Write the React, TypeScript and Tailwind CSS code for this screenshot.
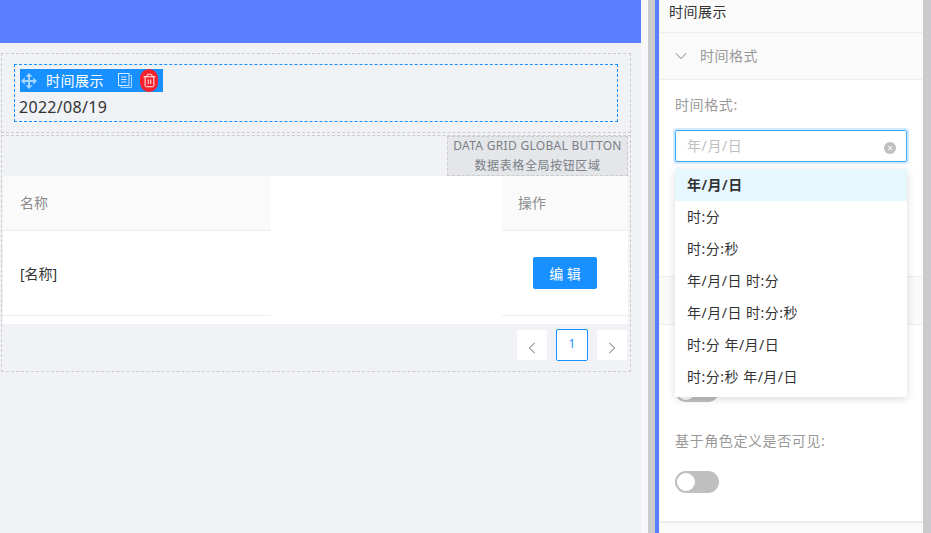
import React from 'react';
import { ChevronDown, ChevronLeft, ChevronRight, Trash2 } from 'lucide-react';

const font = 'font-["Noto_Sans","Noto_Sans_CJK_SC",sans-serif]';

const options = ['年/月/日', '时:分', '时:分:秒', '年/月/日 时:分', '年/月/日 时:分:秒', '时:分 年/月/日', '时:分:秒 年/月/日'];

const Toggle: React.FC = () => (
  <div className="w-[44px] h-[22px] rounded-full bg-[#bfbfbf] p-[2px]">
    <div className="w-[18px] h-[18px] rounded-full bg-white" />
  </div>
);

const MoveIcon: React.FC = () => (
  <svg width="16" height="16" viewBox="0 0 16 16" fill="currentColor">
    <path d="M8 0L11.5 3.8H9V7H12.2V4.5L16 8L12.2 11.5V9H9V12.2H11.5L8 16L4.5 12.2H7V9H3.8V11.5L0 8L3.8 4.5V7H7V3.8H4.5Z" />
  </svg>
);

const CopyIcon: React.FC = () => (
  <svg width="14" height="15" viewBox="0 0 14 15" fill="none" stroke="currentColor" strokeWidth="1">
    <path d="M11 2.5H13.5V14.5H3V12.5" stroke="#a9d6ff" />
    <rect x="0.5" y="0.5" width="10.5" height="12" />
    <path d="M3 4H8.5M3 6.5H8.5M3 9H8.5" />
  </svg>
);

const PageButton: React.FC<{ children: React.ReactNode; active?: boolean }> = ({ children, active }) => (
  <div className={`flex items-center justify-center bg-white rounded-[2px] ${active ? 'w-[32px] h-[32px] border border-[#1890ff] text-[#1890ff] text-xs pb-[3px]' : 'w-[30px] h-[30px] mt-[1px] text-[#808080]'}`}>
    {children}
  </div>
);

export default function App() {
  return (
    <div className={`${font} relative w-[931px] h-[533px] overflow-hidden flex bg-[#f8f8fa]`}>
      {/* canvas */}
      <div className="w-[641px] h-full bg-[#f0f2f5] flex flex-col">
        <div className="h-[43px] bg-[#5a7dff] shrink-0" />
        <div className="pt-[10px] pl-[1px] pr-[10px]">
          <div className="h-[80px] border border-dashed border-[#cccccc] pt-[10px] pl-[12px] pr-[12px]">
            <div className="h-[58px] border border-dashed border-[#1890ff] pt-[4px] pl-[5px]">
              <div className="w-[143px] h-[23px] bg-[#1890ff] flex items-center text-white text-[14px] leading-none tracking-[0.5px]">
                <span className="ml-[1px] text-[#a9d6ff]"><MoveIcon /></span>
                <span className="ml-[9px]">时间展示</span>
                <span className="ml-[14px] text-[#d3e9ff]"><CopyIcon /></span>
                <div className="ml-[8px] w-[18px] h-[23px] rounded-full bg-[#f5222d] flex items-center justify-center">
                  <Trash2 size={15} strokeWidth={1.5} />
                </div>
              </div>
              <div className="mt-[4px] -ml-[1px] text-[16px] leading-[22px] tracking-[0.3px] text-[#333333]">2022/08/19</div>
            </div>
          </div>

          <div className="mt-[2px] h-[237px] border border-dashed border-[#cccccc] pl-[1px] pr-[2px] flex flex-col">
            <div className="h-[40px] flex justify-end shrink-0">
              <div className="w-[181px] h-[40px] bg-[#e4e6ea] border border-dashed border-[#cccccc] flex flex-col items-center justify-center text-[12px] leading-[20px] text-[#7a7f87] tracking-[0.3px]">
                <span>DATA GRID GLOBAL BUTTON</span>
                <span className="tracking-[0.6px]">数据表格全局按钮区域</span>
              </div>
            </div>

            <div className="h-[148px] bg-white flex shrink-0 text-[14px]">
              <div className="w-[268px] flex flex-col">
                <div className="h-[55px] bg-[#fafafa] border-b border-[#eeeeee] flex items-center pl-[17px] pb-[2px] text-[#8c8c8c]">名称</div>
                <div className="h-[85px] border-b border-[#eeeeee] flex items-center pl-[17px] text-[#333333]">[名称]</div>
              </div>
              <div className="flex-1" />
              <div className="w-[126px] flex flex-col">
                <div className="h-[55px] bg-[#fafafa] border-b border-[#eeeeee] flex items-center pl-[16px] pb-[2px] text-[#8c8c8c]">操作</div>
                <div className="h-[85px] border-b border-[#eeeeee] flex items-center justify-center">
                  <div className="w-[64px] h-[32px] bg-[#1890ff] rounded-[2px] text-white flex items-center justify-center">编 辑</div>
                </div>
              </div>
            </div>

            <div className="flex justify-end items-start gap-[9px] pt-[5px] pr-[1px]">
              <PageButton><ChevronLeft size={20} strokeWidth={1.25} className="mt-[6px]" /></PageButton>
              <PageButton active>1</PageButton>
              <PageButton><ChevronRight size={20} strokeWidth={1.25} className="mt-[6px]" /></PageButton>
            </div>
          </div>
        </div>
      </div>

      {/* gutter and side panel */}
      <div className="w-[7px]" />
      <div className="w-[7px] bg-[#cbcbcd]" />
      <div className="w-[4px] bg-[#5a7dff]" />
      <div className="w-[1px] bg-[#f0f2f5]" />
      <div className="w-[263px] h-full bg-white flex flex-col text-[14px]">
        <div className="h-[33px] bg-[#fafafa] border-b border-[#eeeeee] flex items-center pl-[9px] pb-[9px] text-[#333333] tracking-[0.5px] shrink-0">时间展示</div>
        <div className="h-[47px] bg-[#fafafa] border-b border-[#eeeeee] flex items-center pl-[11px] pb-[2px] text-[#999999] tracking-[0.5px] shrink-0">
          <ChevronDown size={20} strokeWidth={1.25} className="mt-[2px]" />
          <span className="ml-[9px]">时间格式</span>
        </div>
        <div className="pl-[15px] pr-[16px] shrink-0">
          <div className="pt-[14px] h-[50px] text-[#999999] tracking-[0.6px]">时间格式:</div>
          <div className="h-[32px] border border-[#40a9ff] rounded-[2px] shadow-[0_0_0_2px_rgba(24,144,255,0.2)] flex items-center pl-[11px] pr-[10px] text-[#bfbfbf]">
            <span className="flex-1 tracking-[0.6px] pb-[1px]">年/月/日</span>
            <div className="mt-[4px] w-[12px] h-[12px] rounded-full bg-[#bfbfbf] flex items-center justify-center text-white text-[10px] leading-none">×</div>
          </div>
        </div>
        <div className="mt-[114px] h-[49px] bg-[#fafafa] border-y border-[#eeeeee] shrink-0" />
        <div className="pl-[15px] pt-[55px] shrink-0"><Toggle /></div>
        <div className="pl-[15px] pt-[29px] leading-[20px] tracking-[0.6px] text-[#999999] shrink-0">基于角色定义是否可见:</div>
        <div className="pl-[15px] pt-[20px] shrink-0"><Toggle /></div>
        <div className="mt-[28px] flex-1 bg-[#fafafa] border-t-2 border-[#eeeeee]" />
      </div>
      <div className="w-[8px] bg-[#cbcbcd]" />

      {/* dropdown overlay */}
      <div className="absolute left-[675px] top-[169px] w-[232px] h-[228px] bg-white rounded-[2px] shadow-[0_2px_8px_rgba(0,0,0,0.15)] text-[14px] text-[#333333]">
        {options.map((o, i) => (
          <div key={o} className={`h-[32px] flex items-center pl-[12px] pb-[2px] tracking-[0.5px] ${i === 0 ? 'bg-[#e6f7ff] font-semibold' : ''}`}>{o}</div>
        ))}
      </div>
    </div>
  );
}
